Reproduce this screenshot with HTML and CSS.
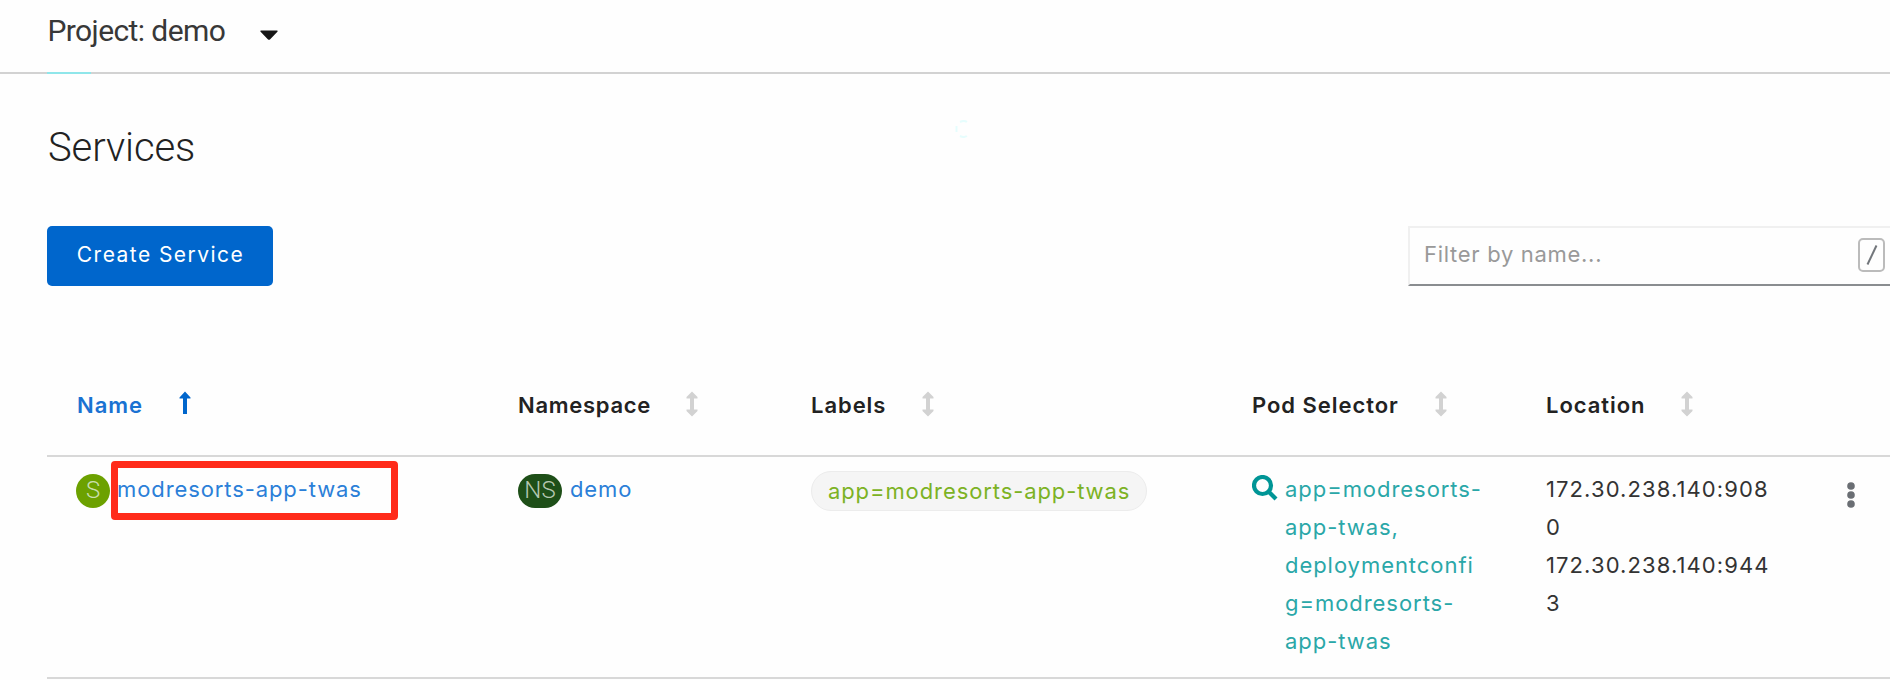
FILE: index.html
```
<!DOCTYPE html>
<html lang="en">
<head>
<meta charset="utf-8">
<title>Services</title>
<link rel="stylesheet" href="styles.css">
</head>
<body>
<header class="project-bar">
  <span class="project-name">Project: demo</span>
  <svg class="caret" width="18" height="10" viewBox="0 0 18 10"><path d="M1 0.5h16c.8 0 .9.8.4 1.3L10.200 9.200a1.700 1.700 0 0 1-2.400 0L.6 1.800C.1 1.300.2.5 1 .5z"/></svg>
  <span class="progress"></span>
</header>
<main class="content">
  <svg class="spinner" width="16" height="18" viewBox="0 0 16 18"><path d="M5 2Q9 0 12 2M1.500 6v6M5 16Q9 18 12 16"/></svg>
  <h1 class="title">Services</h1>
  <div class="toolbar">
    <button class="create" type="button">Create Service</button>
    <div class="filter"><span class="placeholder">Filter by name...</span><kbd class="key"><svg width="12" height="22" viewBox="0 0 12 22"><path d="M1.500 20.500L10.500 1.500"/></svg></kbd></div>
  </div>
  <div class="table">
    <div class="row head">
      <div class="cell sorted"><span>Name</span><svg class="sort" width="12" height="24" viewBox="0 0 12 24"><path d="M6 0.500L11.500 6.500V7.500H8V23H4V7.500H.5V6.500z"/></svg></div>
      <div class="cell namespace"><span>Namespace</span><svg class="sort" width="12" height="26" viewBox="0 0 12 26"><path d="M6 0.500L11.500 6V7.500H8V18.500H11.500V20L6 25.500L.5 20V18.500H4V7.500H.5V6z"/></svg></div>
      <div class="cell"><span>Labels</span><svg class="sort" width="12" height="26" viewBox="0 0 12 26"><path d="M6 0.500L11.500 6V7.500H8V18.500H11.500V20L6 25.500L.5 20V18.500H4V7.500H.5V6z"/></svg></div>
      <div class="cell pods"><span>Pod Selector</span><svg class="sort" width="12" height="26" viewBox="0 0 12 26"><path d="M6 0.500L11.500 6V7.500H8V18.500H11.500V20L6 25.500L.5 20V18.500H4V7.500H.5V6z"/></svg></div>
      <div class="cell"><span>Location</span><svg class="sort" width="12" height="26" viewBox="0 0 12 26"><path d="M6 0.500L11.500 6V7.500H8V18.500H11.500V20L6 25.500L.5 20V18.500H4V7.500H.5V6z"/></svg></div>
    </div>
    <div class="row body">
      <div class="cell name"><span class="badge service">S</span><a class="link">modresorts-app-twas</a><span class="highlight"></span></div>
      <div class="cell"><span class="badge ns">NS</span><a class="link">demo</a></div>
      <div class="cell"><span class="label">app=modresorts-app-twas</span></div>
      <div class="cell"><svg class="search" width="26" height="26" viewBox="0 0 26 26"><circle cx="10.500" cy="10.500" r="8.500"/><path d="M16.500 16.500L24 24"/></svg><div class="selector">app=modresorts-<br>app-twas,<br>deploymentconfi<br>g=modresorts-<br>app-twas</div></div>
      <div class="cell"><div class="location">172.30.238.140:908<br>0<br>172.30.238.140:944<br>3</div></div>
      <div class="cell menu"><svg width="8" height="26" viewBox="0 0 8 26"><circle cx="4" cy="4" r="3.800"/><circle cx="4" cy="13" r="3.800"/><circle cx="4" cy="22" r="3.800"/></svg></div>
    </div>
  </div>
</main>
</body>
</html>
```
FILE: styles.css
```
* { box-sizing: border-box; }
body {
  margin: 0;
  height: 680px;
  overflow: hidden;
  background: #fefefe;
  color: #151515;
  font: 22px/38.2px Inter, "Open Sans", sans-serif;
  letter-spacing: 0.9px;
}
svg { display: block; flex: none; }
.project-bar {
  position: relative;
  display: flex;
  align-items: center;
  height: 74px;
  padding: 0 0 10px 47.5px;
  border-bottom: 2px solid #d2d2d2;
}
.project-name { font: 30px/40px Roboto, sans-serif; letter-spacing: -0.6px; color: #383838; }
.caret { margin: 7px 0 0 35px; fill: #151515; }
.progress {
  position: absolute;
  left: 47px;
  bottom: -2px;
  width: 44px;
  height: 2px;
  background: #8fe6ea;
}
.content { position: relative; padding: 48px 0 0 47px; }
.spinner {
  position: absolute;
  left: 955px;
  top: 46px;
  fill: none;
  stroke: #e6fdfd;
  stroke-width: 2;
}
.title { margin: 0 0 0 1px; font: 300 40px/52px Roboto, sans-serif; letter-spacing: -0.1px; color: #222; }
.toolbar { display: flex; justify-content: space-between; margin-top: 52px; }
.create {
  width: 226px;
  height: 60px;
  padding: 0 0 2px 1px;
  border: 0;
  border-radius: 5px;
  background: #06c;
  color: #fff;
  font: 21px/30px Inter, sans-serif;
  letter-spacing: 1.45px;
}
.filter {
  display: flex;
  align-items: center;
  justify-content: space-between;
  width: 482px;
  height: 60px;
  padding: 0 5px 3px 14px;
  border: 2px solid #f0f0f0;
  border-right: 0;
  border-bottom-color: #8a8d90;
}
.placeholder { color: #999; letter-spacing: 0.7px; }
.key {
  display: flex;
  align-items: center;
  justify-content: center;
  width: 27px;
  height: 34px;
  border: 2px solid #bbb;
  border-radius: 5px;
}
.key svg { fill: none; stroke: #72767b; stroke-width: 2; }
.table { margin-top: 71px; }
.row {
  display: grid;
  grid-template-columns: 441px 293px 441px 294px 300px 1fr;
  border-bottom: 2px solid #d8d8d8;
}
.cell { display: flex; align-items: flex-start; padding-left: 30px; }
.head { height: 100px; font-weight: 600; letter-spacing: 0.95px; color: #222; }
.head .cell { padding-top: 29px; }
.sort { margin: 5px 0 0 36px; fill: #d2d2d2; }
.head .namespace { letter-spacing: 0.7px; }
.head .namespace .sort { margin-left: 35px; }
.head .pods .sort { margin-left: 36.5px; }
.head .sorted { color: #1a72d2; }
.sorted .sort { fill: #06c; }
.body { height: 222px; }
.body .cell { padding-top: 12.5px; }
.badge {
  height: 34px;
  margin: 4px 7px 0 -1px;
  border-radius: 17px;
  color: #c9dfae;
  font: 300 24px/32px Roboto, sans-serif;
  letter-spacing: 0;
  text-align: center;
  flex: none;
}
.service { width: 34px; background: #6ca100; }
.ns { width: 44px; margin: 4px 8px 0 0; color: #b5c7b0; background: #1e4f18; }
.link { color: #2b7fd8; }
.name { position: relative; }
.highlight {
  position: absolute;
  left: 64px;
  top: 4px;
  width: 287px;
  height: 59px;
  border: 7px solid #ff2b1a;
  border-radius: 4px;
}
.label {
  width: 336px;
  height: 40px;
  padding: 0 0 0 16px;
  margin-top: 1px;
  border: 1px solid #ececec;
  border-radius: 20px;
  background: #f5f5f5;
  color: #7cb224;
}
.search { margin: 5px 7px 0 0; fill: none; stroke: #009596; stroke-width: 4.2; }
.selector { color: #2aa7a8; letter-spacing: 0.95px; }
.location { color: #333; letter-spacing: 1.1px; }
.body .menu { padding-top: 25px; padding-left: 31px; }
.menu svg { fill: #6a6e73; }
```
